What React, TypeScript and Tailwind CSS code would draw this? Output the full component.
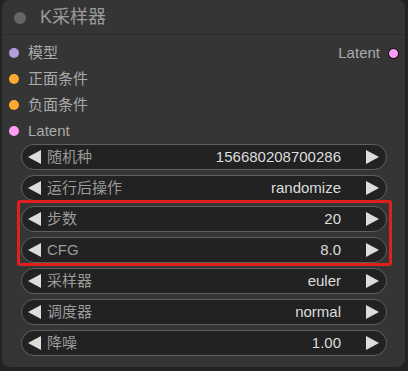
const inputs = [
  { label: "模型", color: "bg-[#b39ddb]" },
  { label: "正面条件", color: "bg-[#ffa931]" },
  { label: "负面条件", color: "bg-[#ffa931]" },
  { label: "Latent", color: "bg-[#ff9cf9]" },
];

const widgets = [
  { label: "随机种", value: "156680208700286" },
  { label: "运行后操作", value: "randomize" },
  { label: "步数", value: "20" },
  { label: "CFG", value: "8.0" },
  { label: "采样器", value: "euler" },
  { label: "调度器", value: "normal" },
  { label: "降噪", value: "1.00" },
];

function Widget({ label, value }: { label: string; value: string }) {
  return (
    <div className="flex h-[26px] items-center rounded-full border border-[#5f5f5f] bg-[#222222] pl-[6px] pr-[7px] text-[15px]">
      <svg width="13" height="14" viewBox="0 0 13 14" className="shrink-0">
        <polygon points="0,7 13,0 13,14" fill="#dddddd" />
      </svg>
      <span className="ml-[6px] text-[#9a9a9a]">{label}</span>
      <span className="ml-auto text-[#dddddd]">{value}</span>
      <svg width="13" height="14" viewBox="0 0 13 14" className="ml-[25px] shrink-0">
        <polygon points="0,0 13,7 0,14" fill="#dddddd" />
      </svg>
    </div>
  );
}

export default function App() {
  return (
    <div
      className="h-[371px] w-[408px] overflow-hidden bg-[#232323] pl-[2px]"
      style={{ fontFamily: '"Liberation Sans", Arial, "Noto Sans CJK SC", sans-serif' }}
    >
      <div className="h-[367px] w-[403px] rounded-[8px] bg-[#353535]">
        <div className="flex h-[35px] items-center border-b border-[#2b2b2b] pl-[12px] pt-px">
          <span className="h-[12px] w-[12px] rounded-full bg-[#666666]" />
          <span className="ml-[14px] text-[18px] text-[#9a9a9a]">K采样器</span>
        </div>
        <div className="pt-[5px]">
          {inputs.map((inp, i) => (
            <div key={inp.label} className="flex h-[26px] items-center pl-[7px] pr-[6px] text-[15px] text-[#aaaaaa]">
              <span className={`h-[10px] w-[10px] rounded-full ${inp.color}`} />
              <span className="ml-[9px]">{inp.label}</span>
              {i === 0 && (
                <>
                  <span className="ml-auto">Latent</span>
                  <span className="ml-[8px] h-[11px] w-[11px] rounded-full border border-black bg-[#ff9cf9]" />
                </>
              )}
            </div>
          ))}
        </div>
        <div className="flex flex-col gap-[5px] pl-[19px] pr-[18px]">
          {widgets.slice(0, 2).map((w) => (
            <Widget key={w.label} {...w} />
          ))}
          <div className="relative flex flex-col gap-[5px]">
            {widgets.slice(2, 4).map((w) => (
              <Widget key={w.label} {...w} />
            ))}
            <div className="pointer-events-none absolute -bottom-[3px] -left-[4px] -right-[5px] -top-[6px] rounded-[3px] border-[3px] border-[#e0201c]" />
          </div>
          {widgets.slice(4).map((w) => (
            <Widget key={w.label} {...w} />
          ))}
        </div>
      </div>
    </div>
  );
}
